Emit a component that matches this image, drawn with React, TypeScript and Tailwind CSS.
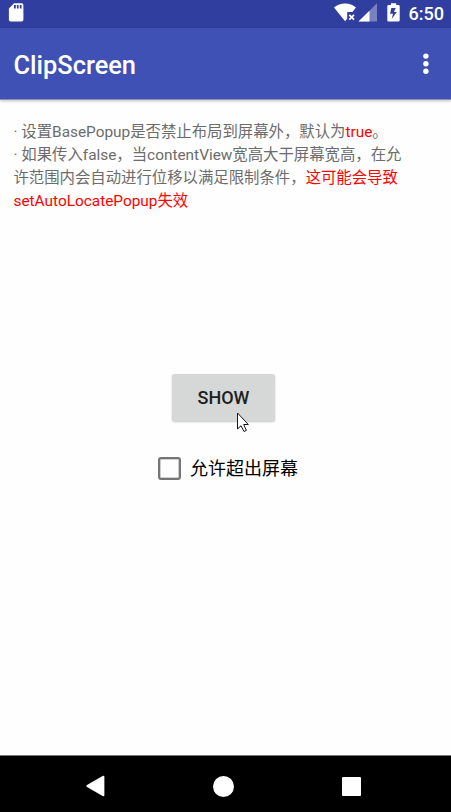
import React from "react";

function StatusBar() {
  return (
    <header className="flex h-7 shrink-0 items-start bg-[#303f9f] text-white">
      <svg className="ml-2 mt-[3px] shrink-0" width="16" height="19" viewBox="0 0 16 19" fill="currentColor">
        <path
          fillRule="evenodd"
          d="M6 0.2H13.7Q15.4 0.2 15.4 1.9V16.8Q15.4 18.5 13.7 18.5H2.5Q0.9 18.5 0.9 16.8V5.4ZM6 2V5.6H7.8V2ZM8.9 2V5.6H10.6V2ZM11.8 2V5.6H13.5V2Z"
        />
      </svg>
      <svg className="ml-[310px] mt-[3px] shrink-0" width="22" height="19" viewBox="0 0 22 19" fill="currentColor">
        <path d="M0 4.4Q4.8 0.4 11.1 0.4T22 4.4L18.4 9H13.2V15.7L11.1 18.3Z" />
        <path d="M15.3 11.8L20 16.7M20 11.8L15.3 16.7" stroke="currentColor" strokeWidth="1.7" />
      </svg>
      <svg className="ml-[2px] mt-[3px] shrink-0" width="20" height="19" viewBox="0 0 20 19" fill="currentColor">
        <path opacity="0.35" d="M0.5 18.5L19 0.3V18.5Z" />
        <path d="M0.5 18.5L11.5 7.8V18.5Z" />
      </svg>
      <svg className="ml-[9px] mt-[3px] shrink-0" width="13" height="19" viewBox="0 0 13 19" fill="currentColor">
        <path
          fillRule="evenodd"
          d="M3.9 0.2H9.2V2H11.4Q12.7 2 12.7 3.3V17.2Q12.7 18.5 11.4 18.5H1.6Q0.3 18.5 0.3 17.2V3.3Q0.3 2 1.6 2H3.9ZM4.3 4.9L3.1 10.7H6L4.7 16L9.8 9H6.9L8.7 4.9Z"
        />
      </svg>
      <span className="ml-[8.5px] mt-[2.5px] text-[18.1px] font-medium leading-[21px]">6:50</span>
    </header>
  );
}

function Toolbar() {
  return (
    <div className="flex h-[72px] shrink-0 items-center justify-between border-b border-[#8c92ae] bg-[#3f51b5] pl-[13.5px] pr-[22px] pt-[2px] text-white shadow-[0_1px_3px_rgba(0,0,0,0.25)]">
      <h1 className="text-[25.4px] font-medium leading-[30px]">ClipScreen</h1>
      <button aria-label="More options">
        <svg width="6" height="24" viewBox="0 0 6 24" fill="currentColor">
          <circle cx="2.9" cy="3.1" r="2.7" />
          <circle cx="2.9" cy="10.7" r="2.7" />
          <circle cx="2.9" cy="18.3" r="2.7" />
        </svg>
      </button>
    </div>
  );
}

function Description() {
  return (
    <div className="whitespace-nowrap pl-[13.5px] pt-[21px] text-[15.38px] leading-[23px] text-[#6c6c6c]">
      <p>
        · 设置BasePopup是否禁止布局到屏幕外，默认为<span className="text-[#ff0000]">true</span>。
      </p>
      <p>· 如果传入false，当contentView宽高大于屏幕宽高，在允</p>
      <p>
        许范围内会自动进行位移以满足限制条件，<span className="text-[#ff0000]">这可能会导致</span>
      </p>
      <p className="text-[#ff0000]">setAutoLocatePopup失效</p>
    </div>
  );
}

function NavigationBar() {
  return (
    <nav className="flex h-[57px] shrink-0 items-center border-t border-[#777] bg-black pt-[4px] text-white">
      <svg className="ml-[86px]" width="19" height="22" viewBox="0 0 19 22" fill="currentColor">
        <path d="M1 10Q-.3 11 1 12L16.6 21Q18.4 22 18.4 20V2Q18.4 0 16.6 1Z" />
      </svg>
      <span className="ml-[108px] size-[21px] rounded-full bg-white" />
      <span className="ml-[108px] size-[19px] rounded-[1px] bg-white" />
    </nav>
  );
}

export default function App() {
  return (
    <div className="relative flex h-[812px] w-[451px] flex-col overflow-hidden bg-[#fefefe] font-[Roboto,'Noto_Sans_CJK_SC',sans-serif]">
      <StatusBar />
      <Toolbar />
      <main className="flex flex-1 flex-col">
        <Description />
        <button className="ml-[172px] mt-[161px] h-[47px] w-[103px] shrink-0 rounded-[2.5px] bg-[#d6d8d7] text-[18px] font-medium text-[#202020] shadow-[0_1px_2px_rgba(0,0,0,0.22)]">
          SHOW
        </button>
        <label className="ml-[158px] mt-[34px] flex items-center text-[18px] leading-[27px] text-black">
          <input
            type="checkbox"
            className="mr-[9px] size-[23px] appearance-none rounded-[3px] border-[2.5px] border-[#757575] shadow-[inset_0_0_0_0.5px_#a0a0a0]"
          />
          允许超出屏幕
        </label>
      </main>
      <NavigationBar />
      <svg className="absolute left-[236px] top-[412px]" width="14" height="21" viewBox="0 0 14 21">
        <path d="M1.5 1V17L5 13.7L8 19.5L10.4 18.4L7.7 12.5H12.3Z" fill="white" stroke="#15152a" strokeWidth="1" />
      </svg>
    </div>
  );
}
